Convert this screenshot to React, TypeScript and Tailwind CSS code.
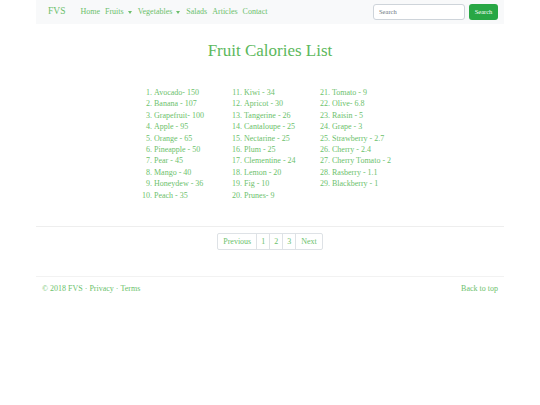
import React from 'react';

const fruits: [string, string][] = [
  ['Avocado', '- 150'], ['Banana', ' - 107'], ['Grapefruit', '- 100'], ['Apple', ' - 95'], ['Orange', ' - 65'],
  ['Pineapple', ' - 50'], ['Pear', ' - 45'], ['Mango', ' - 40'], ['Honeydew', ' - 36'], ['Peach', ' - 35'],
  ['Kiwi', ' - 34'], ['Apricot', ' - 30'], ['Tangerine', ' - 26'], ['Cantaloupe', ' - 25'], ['Nectarine', ' - 25'],
  ['Plum', ' - 25'], ['Clementine', ' - 24'], ['Lemon', ' - 20'], ['Fig', ' - 10'], ['Prunes', '- 9'],
  ['Tomato', ' - 9'], ['Olive', '- 6.8'], ['Raisin', ' - 5'], ['Grape', ' - 3'], ['Strawberry', ' - 2.7'],
  ['Cherry', ' - 2.4'], ['Cherry Tomato', ' - 2'], ['Rasberry', ' - 1.1'], ['Blackberry', ' - 1'],
];

const columns = [fruits.slice(0, 10), fruits.slice(10, 20), fruits.slice(20)];
const colWidths = ['w-[90px]', 'w-[88px]', 'w-[88px]'];

const Caret = () => (
  <span className="inline-block ml-[4px] align-middle w-0 h-0 border-l-[2.5px] border-r-[2.5px] border-t-[3px] border-l-transparent border-r-transparent border-t-[#6cbf6c]" />
);

export default function App() {
  return (
    <div className="w-[540px] h-[405px] bg-white text-[#6cbf6c] text-[8px] leading-[11.4px]" style={{ fontFamily: '"Liberation Serif", serif' }}>
      <div className="w-[468px] mx-auto">
        <nav className="h-[24px] bg-[#f8f9fa] flex items-center pl-[12px] pr-[6px]">
          <span className="text-[9.5px] mr-[15px]">FVS</span>
          <div className="flex items-center gap-[5px]">
            <span>Home</span>
            <span>Fruits<Caret /></span>
            <span className="ml-[1px]">Vegetables<Caret /></span>
            <span className="ml-[1px]">Salads</span>
            <span>Articles</span>
            <span>Contact</span>
          </div>
          <div className="ml-auto flex items-center gap-[4px]">
            <div className="w-[92px] h-[16px] border border-[#ced4da] rounded-[3px] bg-white flex items-center pl-[5px] text-[6.5px] text-[#6c757d]">Search</div>
            <div className="w-[29px] h-[16px] rounded-[3px] bg-[#28a745] text-white text-[6.5px] flex items-center justify-center">Search</div>
          </div>
        </nav>

        <h1 className="text-center text-[17px] leading-[20px] text-[#5cb85c] mt-[17px]">Fruit Calories List</h1>

        <div className="flex pl-[118px] mt-[26px]">
          {columns.map((col, ci) => (
            <ol key={ci} start={ci * 10 + 1} className={`list-decimal list-outside ${colWidths[ci]}`}>
              {col.map(([name, cal]) => (
                <li key={name} className="whitespace-nowrap">{name}{cal}</li>
              ))}
            </ol>
          ))}
        </div>

        <div className="mt-[25px] border-t border-[#eeeeee]" />

        <div className="flex justify-center mt-[6px]">
          <div className="flex h-[17px] border border-[#dee2e6] rounded-[2px]">
            <span className="px-[5px] flex items-center">Previous</span>
            <span className="px-[4px] flex items-center border-l border-[#dee2e6]">1</span>
            <span className="px-[4px] flex items-center border-l border-[#dee2e6]">2</span>
            <span className="px-[4px] flex items-center border-l border-[#dee2e6]">3</span>
            <span className="px-[5px] flex items-center border-l border-[#dee2e6]">Next</span>
          </div>
        </div>

        <div className="mt-[26px] border-t border-[#f2f2f2]" />

        <footer className="flex justify-between px-[6px] mt-[6px]">
          <span>© 2018 FVS · Privacy · Terms</span>
          <span>Back to top</span>
        </footer>
      </div>
    </div>
  );
}
